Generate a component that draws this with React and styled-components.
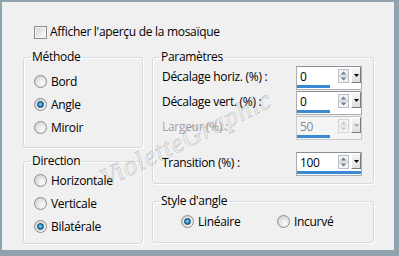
import React from 'react';
import styled, { createGlobalStyle } from 'styled-components';

const GlobalStyle = createGlobalStyle`
  html, body {
    margin: 0;
    padding: 0;
    background: #8fa2ae;
  }
  body {
    font-family: "Open Sans", "Noto Sans", sans-serif;
    font-size: 12px;
    letter-spacing: -0.3px;
    color: #000;
  }
`;

const SpinArrows = ({ disabled }) => (
  <svg width="11" height="14" viewBox="0 0 11 14">
    <rect x="0.5" y="0.5" width="10" height="13" fill="#f2f3f5" stroke={disabled ? '#d4d6d8' : '#b9bec4'} />
    <line x1="1" y1="7" x2="10" y2="7" stroke={disabled ? '#dcdcdc' : '#c3c8cd'} />
    <path d="M5.5 2.5 L8.5 5.5 L2.5 5.5 Z" fill={disabled ? '#c4c9ce' : '#6f8296'} />
    <path d="M5.5 11.5 L8.5 8.5 L2.5 8.5 Z" fill={disabled ? '#c4c9ce' : '#6f8296'} />
  </svg>
);

const DropArrow = ({ disabled }) => (
  <svg width="5" height="3" viewBox="0 0 5 3">
    <path d="M0 0 L5 0 L2.5 3 Z" fill={disabled ? '#a8a8a8' : '#000'} />
  </svg>
);

const params = [
  { label: 'Décalage horiz. (%) :', value: '0', fill: 52 },
  { label: 'Décalage vert. (%) :', value: '0', fill: 52 },
  { label: 'Largeur (%) :', value: '50', fill: 52, disabled: true },
  { label: 'Transition (%) :', value: '100', fill: 100, spaced: true },
];

const App = () => {
  return (
    <Frame>
      <GlobalStyle />
      <Window>
        <CheckRow>
          <CheckBox />
          <span>Afficher l'aperçu de la mosaïque</span>
        </CheckRow>

        <Columns>
          <Column $gap={5}>
            <GroupBox $h={99}>
              <Legend>Méthode</Legend>
              <GroupBody $pt={5} $pl={10}>
                <Radio label="Bord" />
                <Radio label="Angle" checked />
                <Radio label="Miroir" />
              </GroupBody>
            </GroupBox>
            <GroupBox $h={91}>
              <Legend>Direction</Legend>
              <GroupBody $pt={0} $pl={10}>
                <Radio label="Horizontale" />
                <Radio label="Verticale" />
                <Radio label="Bilatérale" checked />
              </GroupBody>
            </GroupBox>
          </Column>

          <Column $gap={9}>
            <GroupBox $h={135}>
              <Legend>Paramètres</Legend>
              <GroupBody $pt={1} $pl={9} $pr={11}>
                {params.map((p) => (
                  <ParamRow key={p.label} $spaced={p.spaced}>
                    <ParamLabel $disabled={p.disabled}>{p.label}</ParamLabel>
                    <SpinField $disabled={p.disabled}>
                      <SpinTop>
                        <SpinValue $disabled={p.disabled}>{p.value}</SpinValue>
                        <SpinBox>
                          <SpinArrows disabled={p.disabled} />
                        </SpinBox>
                        <DropButton>
                          <DropArrow disabled={p.disabled} />
                        </DropButton>
                      </SpinTop>
                      <SpinBar $fill={p.fill} />
                    </SpinField>
                  </ParamRow>
                ))}
              </GroupBody>
            </GroupBox>
            <GroupBox $h={50}>
              <Legend>Style d'angle</Legend>
              <GroupBody $pt={1} $pl={28}>
                <InlineRadios>
                  <Radio label="Linéaire" checked />
                  <Radio label="Incurvé" />
                </InlineRadios>
              </GroupBody>
            </GroupBox>
          </Column>
        </Columns>

        <Watermark>VioletteGraphic</Watermark>
      </Window>
    </Frame>
  );
};

const Radio = ({ label, checked }) => (
  <RadioItem>
    <RadioCircle $checked={checked} />
    <span>{label}</span>
  </RadioItem>
);

// Styled Components
const Frame = styled.div`
  width: 399px;
  height: 256px;
  box-sizing: border-box;
  padding: 2px 5px 6px 2px;
  background: #8fa2ae;
`;

const Window = styled.div`
  position: relative;
  height: 100%;
  box-sizing: border-box;
  padding: 22px 0 0 21px;
  background: #f0f0f0;
  overflow: hidden;
`;

const CheckRow = styled.label`
  display: flex;
  align-items: center;
  gap: 3px;
  height: 16px;
  margin-left: 11px;
  line-height: 16px;
`;

const CheckBox = styled.span`
  width: 13px;
  height: 13px;
  box-sizing: border-box;
  border: 1px solid #8e8f8f;
  background: linear-gradient(135deg, #d0d0d0 0%, #ececec 60%, #fbfbfb 100%);
  box-shadow: inset 0 0 0 1px #f4f4f4;
  flex-shrink: 0;
`;

const Columns = styled.div`
  display: grid;
  grid-template-columns: 120px 222px;
  column-gap: 9px;
  margin-top: 9px;
`;

const Column = styled.div`
  display: flex;
  flex-direction: column;
  gap: ${(p) => p.$gap}px;
`;

const GroupBox = styled.fieldset`
  margin: 0;
  padding: 0 0 0 6px;
  height: ${(p) => p.$h}px;
  box-sizing: border-box;
  border: 1px solid #d5dade;
  border-radius: 3px;
  box-shadow: inset 1px 1px 0 #fff, 1px 1px 0 #fff;
  min-width: 0;
`;

const Legend = styled.legend`
  padding: 0 2px;
  line-height: 16px;
  font-size: 12px;
`;

const GroupBody = styled.div`
  margin-left: -6px;
  padding: ${(p) => p.$pt}px ${(p) => p.$pr || 0}px 0 ${(p) => p.$pl}px;
`;

const RadioItem = styled.label`
  display: flex;
  align-items: center;
  gap: 4px;
  height: 23px;
  white-space: nowrap;
`;

const RadioCircle = styled.span`
  position: relative;
  width: 13px;
  height: 13px;
  box-sizing: border-box;
  border-radius: 50%;
  border: 1px solid #8b8d8f;
  background: radial-gradient(circle at 65% 65%, #fbfbfb 0%, #e6e6e6 45%, #c9c9c9 100%);
  flex-shrink: 0;

  &::after {
    content: '';
    display: ${(p) => (p.$checked ? 'block' : 'none')};
    position: absolute;
    left: 2px;
    top: 2px;
    width: 7px;
    height: 7px;
    box-sizing: border-box;
    border-radius: 50%;
    border: 1px solid #10456b;
    background: radial-gradient(circle at 45% 45%, #8fe1ff 0%, #2d93c9 45%, #0e4e7a 100%);
  }
`;

const InlineRadios = styled.div`
  display: grid;
  grid-template-columns: 96px auto;
`;

const ParamRow = styled.div`
  display: grid;
  grid-template-columns: 1fr 66px;
  align-items: center;
  margin-top: ${(p) => (p.$spaced ? 12 : 1)}px;

  &:first-child {
    margin-top: 0;
  }
`;

const ParamLabel = styled.span`
  padding-bottom: 3px;
  white-space: nowrap;
  color: ${(p) => (p.$disabled ? '#a3a3a3' : '#000')};
`;

const SpinField = styled.div`
  display: flex;
  flex-direction: column;
  height: 24px;
  box-sizing: border-box;
  border: 1px solid ${(p) => (p.$disabled ? '#c9cacc' : '#abadb3')};
  border-top-color: ${(p) => (p.$disabled ? '#c2c3c5' : '#8e9095')};
  background: ${(p) => (p.$disabled ? '#f4f4f4' : '#fff')};
`;

const SpinTop = styled.div`
  display: flex;
  align-items: flex-start;
  height: 17px;
`;

const SpinValue = styled.span`
  flex: 1;
  padding: 2px 0 0 3px;
  line-height: 15px;
  color: ${(p) => (p.$disabled ? '#8a8a8a' : '#000')};
`;

const SpinBox = styled.span`
  display: flex;
  margin: 2px 2px 0 0;
`;

const DropButton = styled.span`
  display: flex;
  align-items: center;
  justify-content: center;
  width: 10px;
  height: 16px;
  box-sizing: border-box;
  border: 1px solid #fff;
  border-right-color: #7a7a7a;
  border-bottom-color: #7a7a7a;
  background: linear-gradient(#f6f6f6, #dedede);
`;

const SpinBar = styled.span`
  display: block;
  width: ${(p) => p.$fill}%;
  height: 3px;
  margin-top: auto;
  margin-bottom: 1px;
  background: #3a8ad3;
`;

const Watermark = styled.span`
  position: absolute;
  left: 184px;
  top: 137px;
  transform: translate(-50%, -50%) rotate(-26deg);
  font-family: "Liberation Serif", serif;
  font-style: italic;
  font-size: 27px;
  letter-spacing: 1px;
  white-space: nowrap;
  color: transparent;
  -webkit-text-stroke: 0.6px rgba(120, 120, 120, 0.4);
  pointer-events: none;
`;

export default App;
